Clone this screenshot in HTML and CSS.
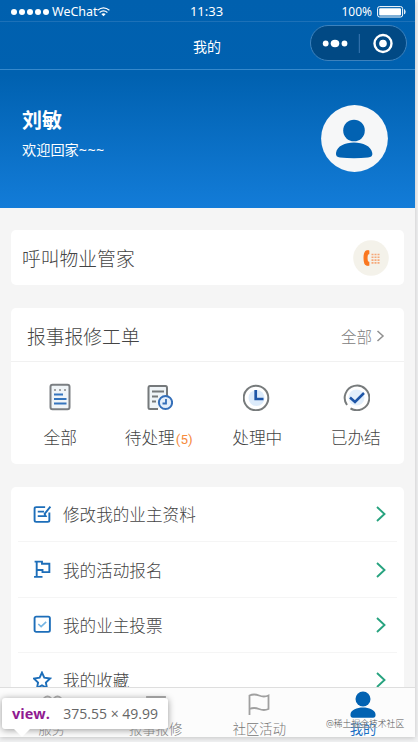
FILE: index.html
```html
<!DOCTYPE html>
<html lang="zh-CN">
<head>
<meta charset="utf-8">
<title>我的</title>
<link rel="stylesheet" href="styles.css">
</head>
<body>
<div class="phone">
  <header class="top">
    <div class="status">
      <div class="signal"><i></i><i></i><i></i><i></i><i></i><span class="carrier">WeChat</span>
        <svg class="wifi" width="13" height="10" viewBox="0 0 13 10" fill="none" stroke="#fff" stroke-width="1.2"><path d="M.6 3.3Q6.5-1.5 12.4 3.3M2.6 5.5Q6.5 2.3 10.4 5.5"/><path d="M4.3 7Q6.5 5.3 8.7 7L6.5 9.3z" fill="#fff" stroke="none"/></svg>
      </div>
      <div class="clock">11:33</div>
      <div class="power">100%
        <svg width="30" height="12" viewBox="0 0 30 12"><rect x=".6" y=".6" width="25" height="10.4" rx="2" fill="none" stroke="#fff"/><rect x="2.2" y="2.2" width="21.8" height="7.2" rx="1" fill="#fff"/><path d="M27.5 3.5q1.5 2.3 0 4.6z" fill="#fff" stroke="#fff" stroke-width=".7"/></svg>
      </div>
    </div>
    <div class="nav">
      <h1>我的</h1>
      <div class="capsule">
        <svg width="96" height="36" viewBox="0 0 96 36"><g fill="#fff"><circle cx="14.7" cy="18.5" r="2.9"/><ellipse cx="24" cy="18.5" rx="4.3" ry="3.7"/><circle cx="33.5" cy="18.5" r="2.9"/><circle cx="72" cy="18.5" r="3.8"/></g><path d="M48.3 9v19" stroke="#3b79b3"/><circle cx="72" cy="18.5" r="8.5" fill="none" stroke="#fff" stroke-width="2.4"/></svg>
      </div>
    </div>
    <div class="hero">
      <div>
        <div class="name">刘敏</div>
        <div class="hello">欢迎回家<span>~~~</span></div>
      </div>
      <svg class="avatar" width="67" height="67" viewBox="0 0 67 67"><circle cx="33.5" cy="33.5" r="33.4" fill="#f6f7f8"/><g fill="#0262b2"><circle cx="33" cy="25.5" r="10.8"/><path d="M15 48C16 41 24 37.5 33 37.5S50 41 51.300 48Q52 52 47 52.500Q33 54 19 52.500Q14.500 52 15 48z"/></g></svg>
    </div>
  </header>

  <main class="content">
    <section class="card call">
      <span>呼叫物业管家</span>
      <svg width="36" height="36" viewBox="0 0 36 36"><circle cx="18" cy="18" r="17.800" fill="#f4f2ea"/><path d="M15.700 10.800H14C10.200 11.500 10.200 24.500 14 25.200h1.700v-3H14.500Q13.300 18 14.500 13.800h1.200z" fill="#fa761e" stroke="#fa761e" stroke-width="1.300" stroke-linejoin="round"/><path d="M18.500 14.500h8M18.500 17.300h8M18.500 20.100h8M18.500 22.900h8" stroke="#f6a879" stroke-width="1.600" stroke-dasharray="2 1"/></svg>
    </section>

    <section class="card orders">
      <div class="orders-head">
        <h2>报事报修工单</h2>
        <span class="more">全部<svg width="9" height="12" viewBox="0 0 9 12" fill="none" stroke="#909090" stroke-width="1.500"><path d="M1.500 1l5.500 5-5.500 5"/></svg></span>
      </div>
      <div class="grid">
        <div class="cell">
          <svg width="28" height="28" viewBox="0 0 28 28" fill="none"><rect x="4.500" y="1.800" width="19" height="24.400" rx="2" fill="#f0f5f8" stroke="#7b7f82" stroke-width="2"/><path d="M8 7h2M13 7h2M18 7h2" stroke="#888" stroke-width="1.300"/><path d="M8 11.500h9M8 16h12.500M8 20.500h12.500" stroke="#3575bd" stroke-width="2"/></svg>
          <span>全部</span>
        </div>
        <div class="cell">
          <svg width="28" height="28" viewBox="0 0 28 28" fill="none"><path d="M13 26H5Q3.500 26 3.500 24.500V5Q3.500 3 5 3H20.500Q22 3 22 5v9" fill="#eff4f7" stroke="#75797b" stroke-width="2"/><path d="M7 8.500h12M7 13.500h6M7 18.500h4" stroke="#75797b" stroke-width="1.800"/><circle cx="20.500" cy="19.500" r="6.600" fill="#e5effa" stroke="#346fb9" stroke-width="2"/><path d="M21 16v4.500H17.500" stroke="#346fb9" stroke-width="1.800"/></svg>
          <span>待处理<em>(5)</em></span>
        </div>
        <div class="cell">
          <svg width="28" height="28" viewBox="0 0 28 28" fill="none"><circle cx="13" cy="15" r="12.300" stroke="#777b7c" stroke-width="2"/><circle cx="13.500" cy="15" r="8" fill="#dcebfb"/><path d="M12.700 7v9H20.500" stroke="#1e56a8" stroke-width="2.700"/></svg>
          <span>处理中</span>
        </div>
        <div class="cell">
          <svg width="28" height="28" viewBox="0 0 28 28" fill="none"><circle cx="14.500" cy="14.500" r="8" fill="#e2effc"/><path d="M5 22A12.300 12.300 0 1 1 8.500 25.300" stroke="#777b7c" stroke-width="2"/><path d="M8 14.500l5 4.500 9-9" stroke="#1e56a8" stroke-width="2.500"/></svg>
          <span>已办结</span>
        </div>
      </div>
    </section>

    <section class="card list">
      <div class="row">
        <svg class="ico" viewBox="0 0 18 18"><path d="M11.500 2H3Q1.500 2 1.500 3.500v11Q1.500 16 3 16h11q1.500 0 1.500-1.500V7"/><path d="M4.500 6.300h6M4.500 10.500h7.500L11 8.500l5.500-7"/></svg>
        <span>修改我的业主资料</span>
        <svg class="go" viewBox="0 0 10 16"><path d="M1 1l7.500 7L1 15"/></svg>
      </div>
      <div class="row">
        <svg class="ico" viewBox="0 0 18 18"><path d="M3.500 1v15M1 16h8M1.500 1.500h7v2H15.500v8H9V9.500H4M8.500 3v1"/></svg>
        <span>我的活动报名</span>
        <svg class="go" viewBox="0 0 10 16"><path d="M1 1l7.500 7L1 15"/></svg>
      </div>
      <div class="row">
        <svg class="ico" viewBox="0 0 18 18"><rect x="1.500" y="1.500" width="14.500" height="14.500" rx="1.500"/><path class="tick" d="M5 8.500l2.700 2.500L12.500 6.500"/></svg>
        <span>我的业主投票</span>
        <svg class="go" viewBox="0 0 10 16"><path d="M1 1l7.500 7L1 15"/></svg>
      </div>
      <div class="row">
        <svg class="ico" viewBox="0 0 18 18"><path d="M8.500 1.500l2.200 4.800 5.500.8-4 3.800 1 5.300-4.700-2.600-4.700 2.600 1-5.300-4-3.800 5.500-.8z"/></svg>
        <span>我的收藏</span>
        <svg class="go" viewBox="0 0 10 16"><path d="M1 1l7.500 7L1 15"/></svg>
      </div>
    </section>
  </main>

  <nav class="tabs">
    <div class="tab"><svg width="26" height="26" viewBox="0 0 26 26"><circle cx="8.500" cy="9" r="4.500"/><circle cx="18.500" cy="9" r="4.500"/><circle cx="8.500" cy="18" r="4"/><circle cx="18.500" cy="18" r="4"/></svg><span>服务</span></div>
    <div class="tab"><svg width="26" height="26" viewBox="0 0 26 26"><path d="M4 22V5h18v17zM8 5v4h4V5M15 8h4"/></svg><span>报事报修</span></div>
    <div class="tab"><svg width="26" height="26" viewBox="0 0 26 26"><path d="M3.500 23V3.500Q8 1.500 13 3.500T22.500 3.500V17Q18 19 13 17T3.500 17"/></svg><span>社区活动</span></div>
    <div class="tab active"><svg width="26" height="28" viewBox="0 0 26 28"><circle cx="13" cy="8" r="7.500"/><path d="M.5 23C1 19 7 16.500 13 16.500S25 19 25.500 23Q26 26.500 23 26.700H3Q0 26.500 .5 23z"/></svg><span>我的</span></div>
  </nav>
</div>
<div class="tooltip"><b>view.</b><span>375.55 × 49.99</span></div>
<div class="watermark">@稀土掘金技术社区</div>
</body>
</html>
```
FILE: styles.css
```css
* { box-sizing: border-box; }
body {
  margin: 0;
  height: 742px;
  overflow: hidden;
  background: #f1f2f3;
  font-family: "Noto Sans", "Noto Sans CJK SC", sans-serif;
  color: #444;
}
svg { display: block; flex: none; }
h1, h2 { margin: 0; font-weight: inherit; }
.phone {
  width: 415px;
  height: 737px;
  display: flex;
  flex-direction: column;
  background: #f5f5f5;
  box-shadow: 0 1px 5px #c5c5c5;
  overflow: hidden;
}
.top {
  flex: none;
  height: 208px;
  background: linear-gradient(#0060ae 0, #0061b0 75px, #137cd8 208px);
  color: #fff;
}
.status {
  height: 22px;
  display: grid;
  grid-template-columns: 1fr auto 1fr;
  align-items: center;
  border-bottom: 1px solid #1d71b8;
  padding: 2px 8px 0 11px;
  font-size: 12px;
}
.signal { display: flex; align-items: center; gap: 2px; }
.signal i { width: 6px; height: 6px; border-radius: 50%; background: #fff; }
.carrier { margin-left: 1px; font-size: 12.500px; }
.wifi { margin-left: -3px; }
.clock { font-size: 13px; margin-left: -5px; margin-top: -2px; }
.power { display: flex; justify-content: flex-end; align-items: center; gap: 5px; }
.nav {
  height: 48px;
  display: grid;
  grid-template-columns: 1fr auto 1fr;
  align-items: center;
  border-bottom: 1px solid #3689cc;
  padding-right: 8px;
}
.nav h1 { grid-column: 2; font-size: 14px; padding: 0 0 0 7px; }
.capsule {
  justify-self: end;
  width: 97px;
  height: 36px;
  margin-top: -5px;
  border: 1px solid #3d82bd;
  border-radius: 18px;
  background: #014984;
  overflow: hidden;
}
.capsule svg { margin-top: -1px; }
.hero {
  height: 138px;
  padding: 0 27px 0 22px;
  display: flex;
  justify-content: space-between;
  align-items: center;
}
.name { font-size: 20px; line-height: 28px; font-weight: 700; margin-top: -12px; }
.hello { font-size: 14.200px; line-height: 20px; margin-top: 5px; }
.hello span { letter-spacing: .5px; }
.avatar { margin-top: -1px; }
.content {
  flex: 1;
  min-height: 0;
  overflow: hidden;
  padding: 22px 11px 0;
  display: flex;
  flex-direction: column;
  gap: 23px;
}
.card { flex: none; background: #fff; border-radius: 5px; }
.call {
  height: 55px;
  padding: 0 15px 0 11px;
  display: flex;
  align-items: center;
  justify-content: space-between;
  font-size: 18.800px;
  font-weight: 300;
}
.orders { height: 156px; }
.orders-head {
  height: 54px;
  padding: 3px 19px 0 16px;
  display: flex;
  justify-content: space-between;
  align-items: center;
  border-bottom: 1px solid #f1f1f1;
}
.orders-head h2 { font-size: 18.800px; font-weight: 300; }
.more { display: flex; align-items: center; gap: 4px; font-size: 15.500px; font-weight: 300; color: #808080; }
.grid {
  display: grid;
  grid-template-columns: repeat(4, 98.500px);
  height: 102px;
  padding-top: 21px;
}
.cell { display: flex; flex-direction: column; align-items: center; gap: 14px; font-size: 16.700px; line-height: 26px; font-weight: 300; }
.cell span { white-space: nowrap; }
.cell em { font-style: normal; font-family: Roboto, sans-serif; font-weight: 400; font-size: 13.500px; color: #f68a3c; margin-left: 1px; }
.list { padding: 0 7px; }
.row {
  height: 55.400px;
  padding: 0 11px 0 15px;
  display: flex;
  align-items: center;
  border-bottom: 1px solid #f5f5f5;
  font-size: 16.600px;
  font-weight: 300;
}
.row span { flex: 1; margin-left: 11px; }
.ico { width: 19px; height: 19px; fill: none; stroke: #1d6eb9; stroke-width: 1.800; }
.ico .tick { stroke: #75b5e4; stroke-width: 1.500; }
.go { width: 10px; height: 16px; fill: none; stroke: #27a37f; stroke-width: 1.900; }
.tabs {
  flex: none;
  height: 50px;
  display: grid;
  grid-template-columns: repeat(4, 1fr);
  border-top: 1px solid #dedede;
  background: #fcfcfc;
  color: #777;
  font-size: 13.300px;
  font-weight: 300;
}
.tab { display: flex; flex-direction: column; align-items: center; padding-top: 3px; }
.tab svg { height: 28px; fill: none; stroke: #a0a0a0; stroke-width: 1.800; }
.tab span { line-height: 18px; margin-top: 1px; }
.tab.active { color: #1a70c4; font-weight: 400; }
.tab.active svg { fill: #0262b2; stroke: none; }
.tooltip {
  position: absolute;
  left: 2px;
  top: 698px;
  width: 166px;
  height: 31px;
  padding: 0 10px;
  display: flex;
  align-items: center;
  justify-content: space-between;
  background: #fff;
  border-radius: 3px;
  box-shadow: 0 1px 7px #999;
  font-family: "Open Sans", "Noto Sans", sans-serif;
  font-size: 14px;
  color: #666;
}
.tooltip b { color: #901a91; font-size: 14.500px; }
.tooltip::after {
  content: "";
  position: absolute;
  left: 12px;
  top: 31px;
  border: 8px solid transparent;
  border-top-color: #fff;
  border-bottom: 0;
}
.watermark {
  position: absolute;
  left: 326px;
  top: 717px;
  font-size: 8.800px;
  line-height: 14px;
  white-space: nowrap;
  font-weight: 300;
  color: #555;
  text-shadow: 0 0 1px #fff;
}
```
